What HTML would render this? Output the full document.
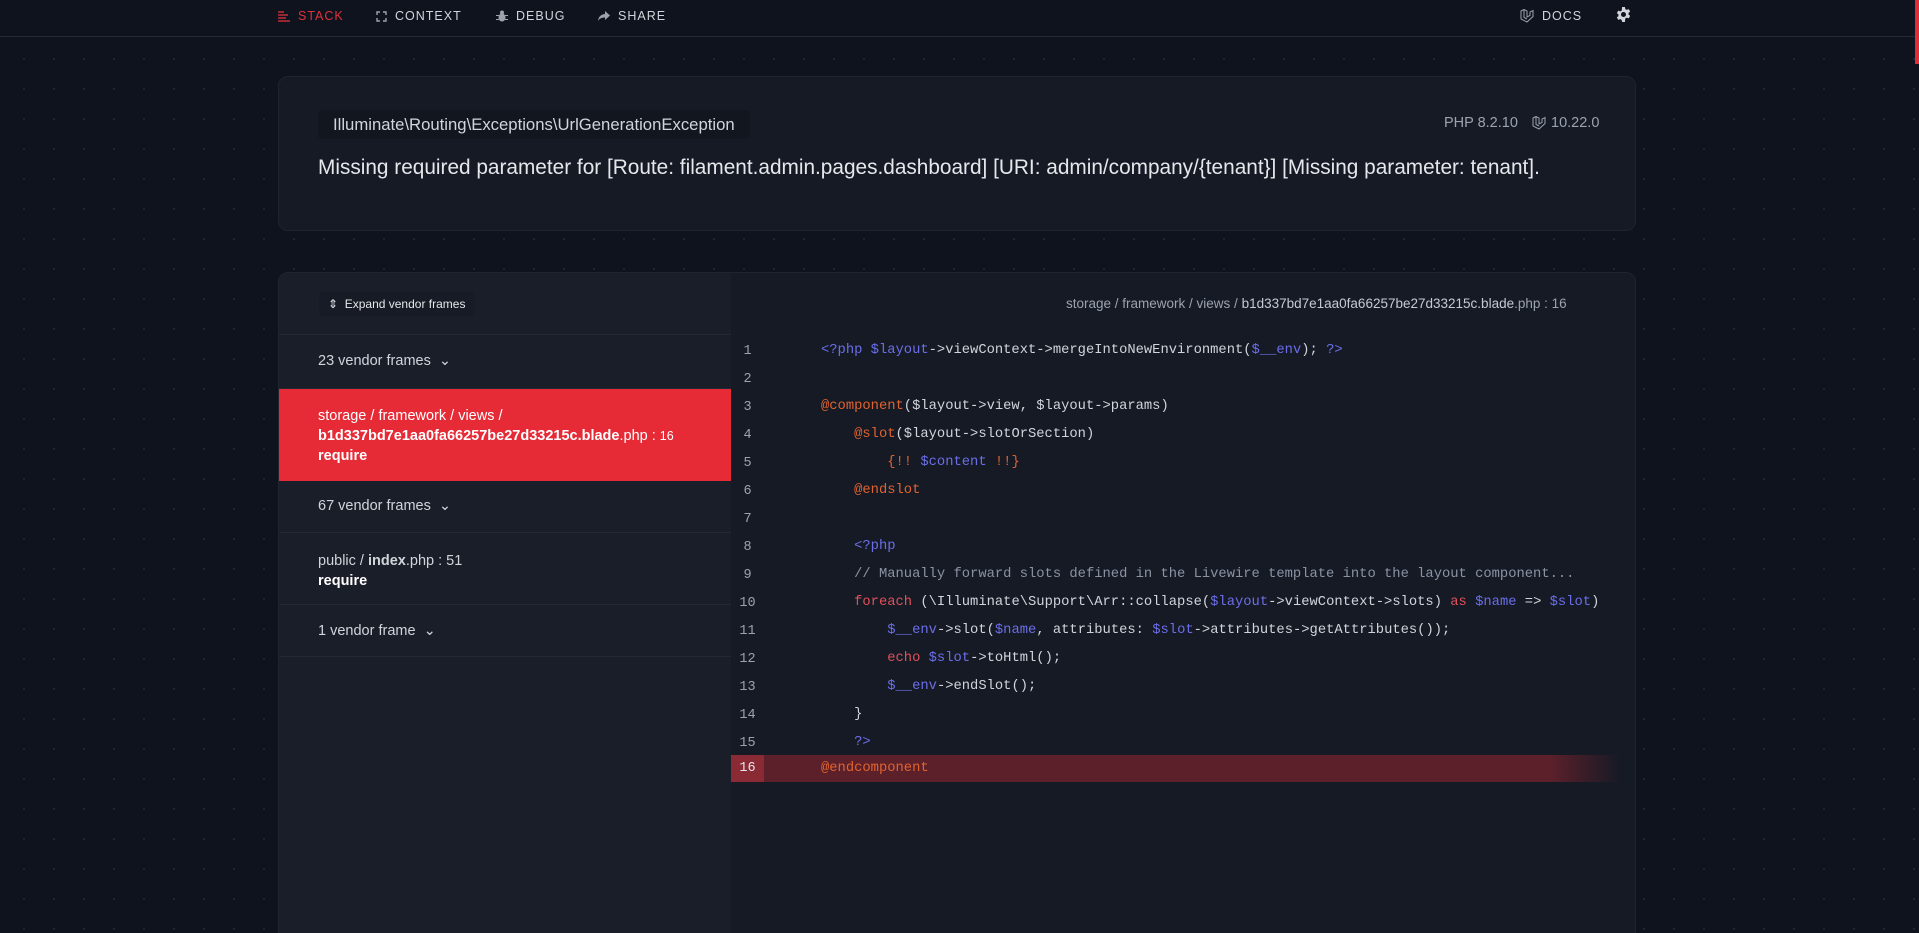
<!DOCTYPE html>
<html><head><meta charset="utf-8"><style>
*{margin:0;padding:0;box-sizing:border-box}
html,body{width:1919px;height:933px;overflow:hidden}
body{background:#0f131d;font-family:"Liberation Sans",sans-serif;color:#e5e7eb;position:relative;
background-image:radial-gradient(circle,#1f2533 1px,transparent 1.3px);background-size:30px 30px;background-position:9px 14px}
.nav{position:absolute;left:0;top:0;width:1919px;height:37px;background:#0f131d;border-bottom:1px solid #252a36}
.ni{position:absolute;top:9px;font-size:12.5px;letter-spacing:1px;color:#d1d5db;display:flex;align-items:center;gap:8px}
.sb{position:absolute;right:0;top:0;width:4px;height:64px;background:#e02d39}
.card{position:absolute;left:278px;width:1358px;background:#151a25;border:1px solid #1f2430;border-radius:10px}
.pill{position:absolute;left:318px;top:110px;height:29px;padding:0 15px;background:#12161f;border-radius:4px;font-size:16.7px;color:#d1d5db;line-height:29px}
.msg{position:absolute;left:318px;top:156px;font-size:20.8px;color:#e5e7eb;white-space:nowrap}
.ver{position:absolute;top:115px;font-size:14.5px;color:#9ca3af}
.left{position:absolute;left:279px;top:273px;width:452px;height:660px;background:#191e29;border-radius:10px 0 0 0}
.row{position:absolute;left:0;width:452px;border-bottom:1px solid #232835;font-size:14.5px;color:#d1d5db}
.row .t{position:absolute;left:39px}
.code{position:absolute;left:731px;top:336px;width:904px;height:600px}
.gut{position:absolute;left:0;top:0;width:33px;height:600px;background:#151a25}
.ln{position:absolute;left:0;width:33px;text-align:center;font-family:"Liberation Mono",monospace;font-size:13.5px;color:#9ca3af}
.cl{position:absolute;left:90px;font-family:"Liberation Mono",monospace;font-size:13.8px;color:#d1d5db;white-space:pre}
.p{color:#6b6ee8}.o{color:#e0632e}.r{color:#e0505a}.c{color:#8b93a3}
</style></head><body>
<div class="nav">
 <div class="ni" style="left:278px;color:#e0303b"><svg width="12" height="11" viewBox="0 0 12 11"><g stroke="#e0303b" stroke-width="1.3"><line x1="0" y1="1" x2="6" y2="1"/><line x1="0" y1="4" x2="10" y2="4"/><line x1="0" y1="7" x2="8" y2="7"/><line x1="0" y1="10" x2="12" y2="10"/></g></svg>STACK</div>
 <div class="ni" style="left:376px"><svg width="11" height="11" viewBox="0 0 11 11" fill="none" stroke="#9ca3af" stroke-width="1.4"><path d="M1 4V1h3M7 1h3v3M10 7v3H7M4 10H1V7"/></svg>CONTEXT</div>
 <div class="ni" style="left:496px"><svg width="12" height="12" viewBox="0 0 12 12" fill="#9ca3af"><ellipse cx="6" cy="7.5" rx="3.5" ry="4"/><circle cx="6" cy="2.5" r="2"/><path d="M0 5h3v1H0zM9 5h3v1H9zM0 9h3v1H0zM9 9h3v1H9z"/></svg>DEBUG</div>
 <div class="ni" style="left:598px"><svg width="12" height="11" viewBox="0 0 12 11" fill="#9ca3af"><path d="M7 0l5 4.5L7 9V6.5C3.5 6.5 1.5 7.5 0 10c.5-4 2.5-6.5 7-7z"/></svg>SHARE</div>
 <div class="ni" style="left:1520px"><svg width="14" height="14" viewBox="0 0 14 14" fill="none" stroke="#9ca3af" stroke-width="1"><path d="M1 2l3-1.5 3 1.5v6l3-1.5V3l3-1.5v6L7 13 1 10zM4 .5v8l3 1.5"/></svg>DOCS</div>
 <div class="ni" style="left:1616px;top:7px"><svg width="15" height="15" viewBox="0 0 16 16"><path fill="#d1d5db" d="M6.5 0h3l.4 2.2 1.6.9 2.1-.8 1.5 2.6-1.7 1.4v1.8l1.7 1.4-1.5 2.6-2.1-.8-1.6.9L9.5 16h-3l-.4-2.2-1.6-.9-2.1.8L.9 11.1l1.7-1.4V7.9L.9 6.5l1.5-2.6 2.1.8 1.6-.9zM8 5.3a2.7 2.7 0 100 5.4 2.7 2.7 0 000-5.4z"/></svg></div>
</div>
<div class="sb"></div>

<div class="card" style="top:76px;height:155px"></div>
<div class="pill">Illuminate\Routing\Exceptions\UrlGenerationException</div>
<div class="ver" style="left:1444px">PHP 8.2.10</div>
<div class="ver" style="left:1532px;display:flex;gap:5px;align-items:center"><svg width="14" height="14" viewBox="0 0 14 14" fill="none" stroke="#9ca3af" stroke-width="1"><path d="M1 2l3-1.5 3 1.5v6l3-1.5V3l3-1.5v6L7 13 1 10zM4 .5v8l3 1.5"/></svg>10.22.0</div>
<div class="msg">Missing required parameter for [Route: filament.admin.pages.dashboard] [URI: admin/company/{tenant}] [Missing parameter: tenant].</div>

<div class="card" style="top:272px;height:700px"></div>
<div class="left">
 <div class="row" style="top:0;height:62px"><div style="position:absolute;left:40px;top:19px;height:24px;padding:0 9px;background:#171b25;border-radius:4px;font-size:12px;line-height:24px;color:#e5e7eb">&#8661;&nbsp; Expand vendor frames</div></div>
 <div class="row" style="top:62px;height:54px"><span class="t" style="top:18px">23 vendor frames &nbsp;⌄</span></div>
 <div class="row" style="top:116px;height:92px;background:#e62b37;border:none;color:#fff"><div class="t" style="top:17px;line-height:20px">storage / framework / views /<br><b>b1d337bd7e1aa0fa66257be27d33215c.blade</b>.php : <span style="font-size:12.5px">16</span><br><b>require</b></div></div>
 <div class="row" style="top:208px;height:52px"><span class="t" style="top:17px">67 vendor frames &nbsp;⌄</span></div>
 <div class="row" style="top:260px;height:72px"><div class="t" style="top:18px;line-height:20px">public / <b>index</b>.php : 51<br><b style="color:#fff">require</b></div></div>
 <div class="row" style="top:332px;height:52px"><span class="t" style="top:18px">1 vendor frame &nbsp;⌄</span></div>
</div>
<div style="position:absolute;left:1066px;top:296px;font-size:13.5px;color:#9ca3af">storage / framework / views / <span style="color:#c5cad3">b1d337bd7e1aa0fa66257be27d33215c.blade</span>.php : 16</div>
<div class="code" style="top:339px">
 <div class="gut"></div>
 <div style="position:absolute;left:0;top:416px;width:890px;height:27px;background:linear-gradient(90deg,#5c202b 92%,rgba(92,32,43,0))"></div>
 <div style="position:absolute;left:0;top:416px;width:33px;height:27px;background:#8a2a34"></div>
 <div class="ln" style="top:5px">1</div><div class="ln" style="top:33px">2</div><div class="ln" style="top:61px">3</div><div class="ln" style="top:89px">4</div><div class="ln" style="top:117px">5</div><div class="ln" style="top:145px">6</div><div class="ln" style="top:173px">7</div><div class="ln" style="top:201px">8</div><div class="ln" style="top:229px">9</div><div class="ln" style="top:257px">10</div><div class="ln" style="top:285px">11</div><div class="ln" style="top:313px">12</div><div class="ln" style="top:341px">13</div><div class="ln" style="top:369px">14</div><div class="ln" style="top:397px">15</div><div class="ln" style="top:422px;color:#e5e7eb">16</div>
 <div class="cl" style="top:4px"><span class="p">&lt;?php $layout</span>-&gt;viewContext-&gt;mergeIntoNewEnvironment(<span class="p">$__env</span>); <span class="p">?&gt;</span></div>
 <div class="cl" style="top:60px"><span class="o">@component</span>($layout-&gt;view, $layout-&gt;params)</div>
 <div class="cl" style="top:88px">    <span class="o">@slot</span>($layout-&gt;slotOrSection)</div>
 <div class="cl" style="top:116px">        <span class="o">{!! </span><span class="p">$content</span><span class="o"> !!}</span></div>
 <div class="cl" style="top:144px">    <span class="o">@endslot</span></div>
 <div class="cl" style="top:200px">    <span class="p">&lt;?php</span></div>
 <div class="cl" style="top:228px">    <span class="c">// Manually forward slots defined in the Livewire template into the layout component...</span></div>
 <div class="cl" style="top:256px">    <span class="r">foreach</span> (\Illuminate\Support\Arr::collapse(<span class="p">$layout</span>-&gt;viewContext-&gt;slots) <span class="r">as</span> <span class="p">$name</span> =&gt; <span class="p">$slot</span>)</div>
 <div class="cl" style="top:284px">        <span class="p">$__env</span>-&gt;slot(<span class="p">$name</span>, attributes: <span class="p">$slot</span>-&gt;attributes-&gt;getAttributes());</div>
 <div class="cl" style="top:312px">        <span class="r">echo</span> <span class="p">$slot</span>-&gt;toHtml();</div>
 <div class="cl" style="top:340px">        <span class="p">$__env</span>-&gt;endSlot();</div>
 <div class="cl" style="top:368px">    }</div>
 <div class="cl" style="top:396px">    <span class="p">?&gt;</span></div>
 <div class="cl" style="top:422px"><span class="o">@endcomponent</span></div>
</div>
</body></html>
